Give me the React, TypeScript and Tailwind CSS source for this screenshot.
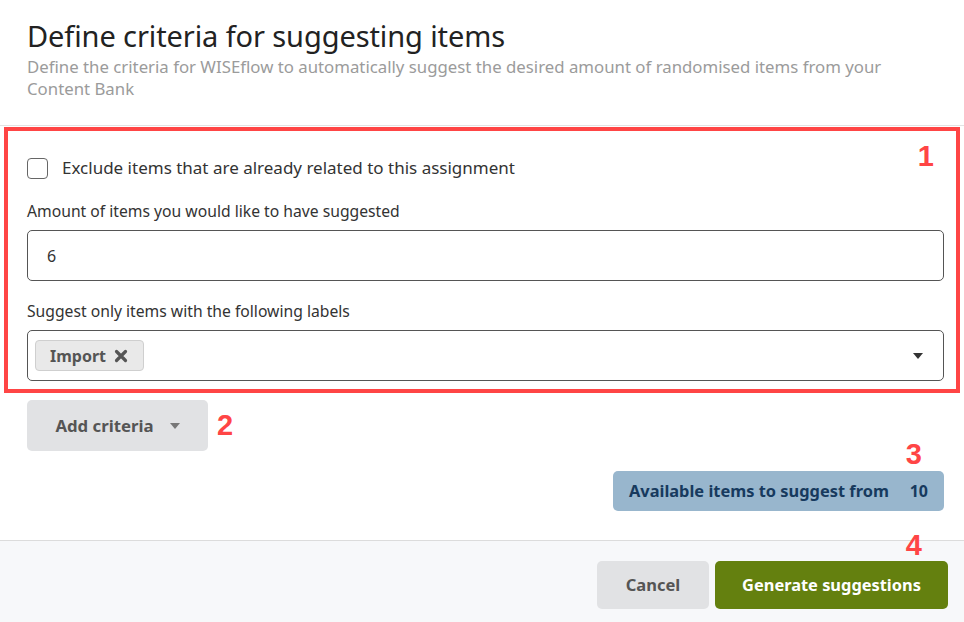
import React from "react";

const font = { fontFamily: '"Noto Sans", "Open Sans", sans-serif' };
const annot = { fontFamily: '"Liberation Sans", sans-serif' };

function Caret({ className = "" }: { className?: string }) {
  return (
    <svg width="10" height="6" viewBox="0 0 10 6" className={className}>
      <path d="M0 0 L10 0 L5 6 Z" fill="currentColor" />
    </svg>
  );
}

export default function App() {
  return (
    <div className="w-[964px] h-[622px] bg-white flex flex-col relative overflow-hidden" style={font}>
      <header className="px-[27px] pt-[17px] h-[126px] border-b border-[#e3e3e3]">
        <h1 className="text-[29px] leading-[38px] text-[#222] tracking-[-0.1px]">Define criteria for suggesting items</h1>
        <p className="text-[16.8px] leading-[22px] text-[#9b9b9b] mt-[1px] w-[880px]">
          Define the criteria for WISEflow to automatically suggest the desired amount of randomised items from your Content Bank
        </p>
      </header>

      <section className="relative mx-[4px] mt-[1px] h-[266px] border-4 border-[#ff4545] pl-[19px] pr-[10px] pt-[26px]">
        <span className="absolute right-[22px] top-[11px] text-[29px] font-bold leading-none text-[#ff4545]" style={annot}>1</span>
        <label className="flex items-center gap-[14px] h-[22px]">
          <span className="w-[21px] h-[21px] border border-[#666] rounded-[4px] bg-white" />
          <span className="text-[17px] leading-[22px] text-[#333]">Exclude items that are already related to this assignment</span>
        </label>
        <div className="mt-[22px] h-[20px] text-[15.7px] leading-[20px] text-[#333]">Amount of items you would like to have suggested</div>
        <div className="mt-[9px] mr-[2px] h-[51px] border border-[#555] rounded-[5px] flex items-center pl-[19px] text-[16px] text-[#333]">6</div>
        <div className="mt-[20px] h-[20px] text-[15.7px] leading-[20px] text-[#333]">Suggest only items with the following labels</div>
        <div className="mt-[9px] mr-[2px] h-[51px] border border-[#555] rounded-[5px] flex items-center pl-[7px] pr-[20px]">
          <span className="h-[31px] w-[109px] px-[14px] flex items-center gap-[8px] bg-[#e9e9e9] border border-[#cfcfcf] rounded-[4px] text-[16px] font-bold text-[#555]">
            Import
            <svg width="14" height="14" viewBox="0 0 14 14">
              <path d="M2.5 2.5 L11.5 11.5 M11.5 2.5 L2.5 11.5" stroke="#555" strokeWidth="3.2" strokeLinecap="round" />
            </svg>
          </span>
          <span className="flex-1" />
          <Caret className="text-[#333]" />
        </div>
      </section>

      <div className="px-[27px] mt-[7px] flex items-center">
        <button className="h-[51px] w-[181px] bg-[#e1e2e4] rounded-[5px] flex items-center justify-center gap-[16px] text-[16.8px] font-bold text-[#555]">
          Add criteria
          <Caret className="text-[#777]" />
        </button>
        <span className="ml-[9px] text-[29px] font-bold text-[#ff4545] leading-none" style={annot}>2</span>
      </div>

      <div className="relative px-[20px] mt-[20px] flex justify-end">
        <span className="absolute right-[42px] top-[-31px] text-[29px] font-bold text-[#ff4545] leading-none" style={annot}>3</span>
        <div className="h-[40px] w-[331px] bg-[#98b6cd] rounded-[5px] flex items-center pl-[16px] pr-[16px] text-[16.4px] font-bold text-[#173a5e]">
          <span>Available items to suggest from</span>
          <span className="ml-auto text-[16px]">10</span>
        </div>
      </div>

      <footer className="relative mt-[29px] flex-1 border-t border-[#dcdcdc] bg-[#f7f8fa] flex justify-end items-start pt-[20px] pr-[16px] gap-[6px]">
        <span className="absolute right-[42px] top-[-10px] text-[29px] font-bold text-[#ff4545] leading-none" style={annot}>4</span>
        <button className="h-[48px] w-[112px] bg-[#e1e2e4] rounded-[5px] text-[16.5px] font-bold text-[#555]">Cancel</button>
        <button className="h-[48px] w-[233px] bg-[#64800f] rounded-[5px] text-[16.4px] font-bold text-white">Generate suggestions</button>
      </footer>
    </div>
  );
}
